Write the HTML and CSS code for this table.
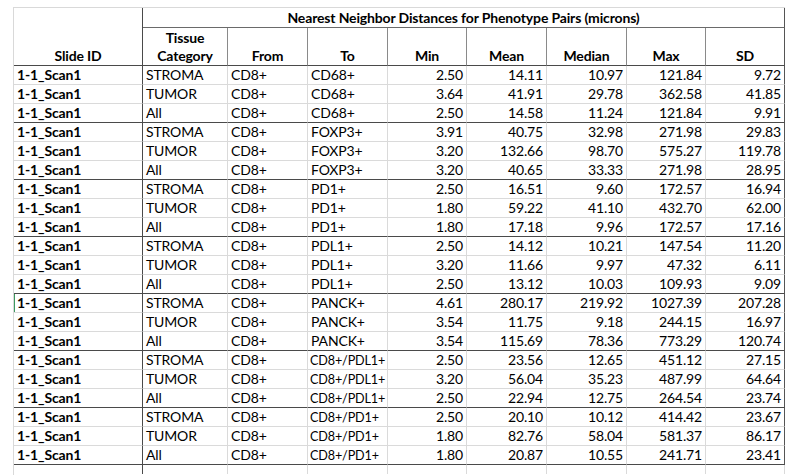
FILE: index.html
```html
<!DOCTYPE html>
<html lang="en">
<head>
<meta charset="utf-8">
<title>Nearest Neighbor Distances</title>
<link rel="stylesheet" href="styles.css">
</head>
<body>
<div class="sheet">
  <div class="c hd slide">Slide ID</div>
  <div class="c hd title">Nearest Neighbor Distances for Phenotype Pairs (microns)</div>
  <div class="c hd sub">Tissue<br>Category</div>
  <div class="c hd sub">From</div>
  <div class="c hd sub">To</div>
  <div class="c hd sub">Min</div>
  <div class="c hd sub">Mean</div>
  <div class="c hd sub">Median</div>
  <div class="c hd sub">Max</div>
  <div class="c hd sub last">SD</div>

  <div class="row"><span class="c">1-1_Scan1</span><span class="c">STROMA</span><span class="c">CD8+</span><span class="c">CD68+</span><span class="c n">2.50</span><span class="c n">14.11</span><span class="c n">10.97</span><span class="c n">121.84</span><span class="c n">9.72</span></div>
  <div class="row"><span class="c">1-1_Scan1</span><span class="c">TUMOR</span><span class="c">CD8+</span><span class="c">CD68+</span><span class="c n">3.64</span><span class="c n">41.91</span><span class="c n">29.78</span><span class="c n">362.58</span><span class="c n">41.85</span></div>
  <div class="row g"><span class="c">1-1_Scan1</span><span class="c">All</span><span class="c">CD8+</span><span class="c">CD68+</span><span class="c n">2.50</span><span class="c n">14.58</span><span class="c n">11.24</span><span class="c n">121.84</span><span class="c n">9.91</span></div>

  <div class="row"><span class="c">1-1_Scan1</span><span class="c">STROMA</span><span class="c">CD8+</span><span class="c">FOXP3+</span><span class="c n">3.91</span><span class="c n">40.75</span><span class="c n">32.98</span><span class="c n">271.98</span><span class="c n">29.83</span></div>
  <div class="row"><span class="c">1-1_Scan1</span><span class="c">TUMOR</span><span class="c">CD8+</span><span class="c">FOXP3+</span><span class="c n">3.20</span><span class="c n">132.66</span><span class="c n">98.70</span><span class="c n">575.27</span><span class="c n">119.78</span></div>
  <div class="row g"><span class="c">1-1_Scan1</span><span class="c">All</span><span class="c">CD8+</span><span class="c">FOXP3+</span><span class="c n">3.20</span><span class="c n">40.65</span><span class="c n">33.33</span><span class="c n">271.98</span><span class="c n">28.95</span></div>

  <div class="row"><span class="c">1-1_Scan1</span><span class="c">STROMA</span><span class="c">CD8+</span><span class="c">PD1+</span><span class="c n">2.50</span><span class="c n">16.51</span><span class="c n">9.60</span><span class="c n">172.57</span><span class="c n">16.94</span></div>
  <div class="row"><span class="c">1-1_Scan1</span><span class="c">TUMOR</span><span class="c">CD8+</span><span class="c">PD1+</span><span class="c n">1.80</span><span class="c n">59.22</span><span class="c n">41.10</span><span class="c n">432.70</span><span class="c n">62.00</span></div>
  <div class="row g"><span class="c">1-1_Scan1</span><span class="c">All</span><span class="c">CD8+</span><span class="c">PD1+</span><span class="c n">1.80</span><span class="c n">17.18</span><span class="c n">9.96</span><span class="c n">172.57</span><span class="c n">17.16</span></div>

  <div class="row"><span class="c">1-1_Scan1</span><span class="c">STROMA</span><span class="c">CD8+</span><span class="c">PDL1+</span><span class="c n">2.50</span><span class="c n">14.12</span><span class="c n">10.21</span><span class="c n">147.54</span><span class="c n">11.20</span></div>
  <div class="row"><span class="c">1-1_Scan1</span><span class="c">TUMOR</span><span class="c">CD8+</span><span class="c">PDL1+</span><span class="c n">3.20</span><span class="c n">11.66</span><span class="c n">9.97</span><span class="c n">47.32</span><span class="c n">6.11</span></div>
  <div class="row g"><span class="c">1-1_Scan1</span><span class="c">All</span><span class="c">CD8+</span><span class="c">PDL1+</span><span class="c n">2.50</span><span class="c n">13.12</span><span class="c n">10.03</span><span class="c n">109.93</span><span class="c n">9.09</span></div>

  <div class="row"><span class="c mark">1-1_Scan1</span><span class="c">STROMA</span><span class="c">CD8+</span><span class="c">PANCK+</span><span class="c n">4.61</span><span class="c n">280.17</span><span class="c n">219.92</span><span class="c n">1027.39</span><span class="c n">207.28</span></div>
  <div class="row"><span class="c">1-1_Scan1</span><span class="c">TUMOR</span><span class="c">CD8+</span><span class="c">PANCK+</span><span class="c n">3.54</span><span class="c n">11.75</span><span class="c n">9.18</span><span class="c n">244.15</span><span class="c n">16.97</span></div>
  <div class="row g"><span class="c">1-1_Scan1</span><span class="c">All</span><span class="c">CD8+</span><span class="c">PANCK+</span><span class="c n">3.54</span><span class="c n">115.69</span><span class="c n">78.36</span><span class="c n">773.29</span><span class="c n">120.74</span></div>

  <div class="row"><span class="c">1-1_Scan1</span><span class="c">STROMA</span><span class="c">CD8+</span><span class="c pair"><span class="fit">CD8+/PDL1+</span></span><span class="c n">2.50</span><span class="c n">23.56</span><span class="c n">12.65</span><span class="c n">451.12</span><span class="c n">27.15</span></div>
  <div class="row"><span class="c">1-1_Scan1</span><span class="c">TUMOR</span><span class="c">CD8+</span><span class="c pair"><span class="fit">CD8+/PDL1+</span></span><span class="c n">3.20</span><span class="c n">56.04</span><span class="c n">35.23</span><span class="c n">487.99</span><span class="c n">64.64</span></div>
  <div class="row g"><span class="c">1-1_Scan1</span><span class="c">All</span><span class="c">CD8+</span><span class="c pair"><span class="fit">CD8+/PDL1+</span></span><span class="c n">2.50</span><span class="c n">22.94</span><span class="c n">12.75</span><span class="c n">264.54</span><span class="c n">23.74</span></div>

  <div class="row"><span class="c">1-1_Scan1</span><span class="c">STROMA</span><span class="c">CD8+</span><span class="c pair"><span class="fit">CD8+/PD1+</span></span><span class="c n">2.50</span><span class="c n">20.10</span><span class="c n">10.12</span><span class="c n">414.42</span><span class="c n">23.67</span></div>
  <div class="row"><span class="c">1-1_Scan1</span><span class="c">TUMOR</span><span class="c">CD8+</span><span class="c pair"><span class="fit">CD8+/PD1+</span></span><span class="c n">1.80</span><span class="c n">82.76</span><span class="c n">58.04</span><span class="c n">581.37</span><span class="c n">86.17</span></div>
  <div class="row g"><span class="c">1-1_Scan1</span><span class="c">All</span><span class="c">CD8+</span><span class="c pair"><span class="fit">CD8+/PD1+</span></span><span class="c n">1.80</span><span class="c n">20.87</span><span class="c n">10.55</span><span class="c n">241.71</span><span class="c n">23.41</span></div>

  <div class="row filler"><span class="c"></span><span class="c"></span><span class="c"></span><span class="c"></span><span class="c"></span><span class="c"></span><span class="c"></span><span class="c"></span><span class="c"></span></div>
</div>
</body>
</html>
```

FILE: styles.css
```css
html, body {
  margin: 0;
  padding: 0;
  background: #ffffff;
  overflow: hidden;
}

body {
  font-family: "Lato", "Liberation Sans", sans-serif;
  font-size: 14px;
  letter-spacing: -0.15px;
  color: #000000;
}

.sheet {
  display: grid;
  grid-template-columns: 129px 85px 80px 80px 79px 80px 80px 79px 79px;
  grid-template-rows: 20px 38px;
  grid-auto-rows: 19px;
  width: max-content;
  margin: 7px 0 0 13px;
  border-top: 1px solid #d9d9d9;
  border-left: 1px solid #d9d9d9;
}

.c {
  box-sizing: border-box;
  display: block;
  border-right: 1px solid #dadada;
  border-bottom: 1px solid #dadada;
  padding: 0 3px;
  line-height: 18px;
  white-space: nowrap;
  overflow: hidden;
}

.hd {
  font-weight: 700;
  display: flex;
  align-items: flex-end;
  justify-content: center;
  text-align: center;
  border-bottom-color: #4a4a4a;
  border-right-color: #8a8a8a;
}

.slide {
  grid-row: 1 / span 2;
  border-right-color: #4a4a4a;
}

.title {
  grid-column: 2 / span 8;
  align-items: center;
  border-bottom-color: #6a6a6a;
  border-right-color: #555555;
  line-height: 19px;
}

.sub.last {
  border-right-color: #555555;
}

.row {
  display: contents;
}

.row > .c:first-child {
  font-weight: 700;
  border-right-color: #4a4a4a;
}

.row > .c:last-child {
  border-right-color: #555555;
}

.row.g > .c {
  border-bottom-color: #4a4a4a;
}

.n {
  text-align: right;
}

.pair {
  padding-left: 2px;
  padding-right: 0;
}

.fit {
  display: inline-block;
  transform: scaleX(0.9);
  transform-origin: left center;
}

.mark {
  box-shadow: inset 1px 0 0 #3c9a5f;
}

.filler > .c {
  height: 9px;
  border-bottom: none;
}

.filler > .c:last-child {
  border-right-color: #dadada;
}
```
